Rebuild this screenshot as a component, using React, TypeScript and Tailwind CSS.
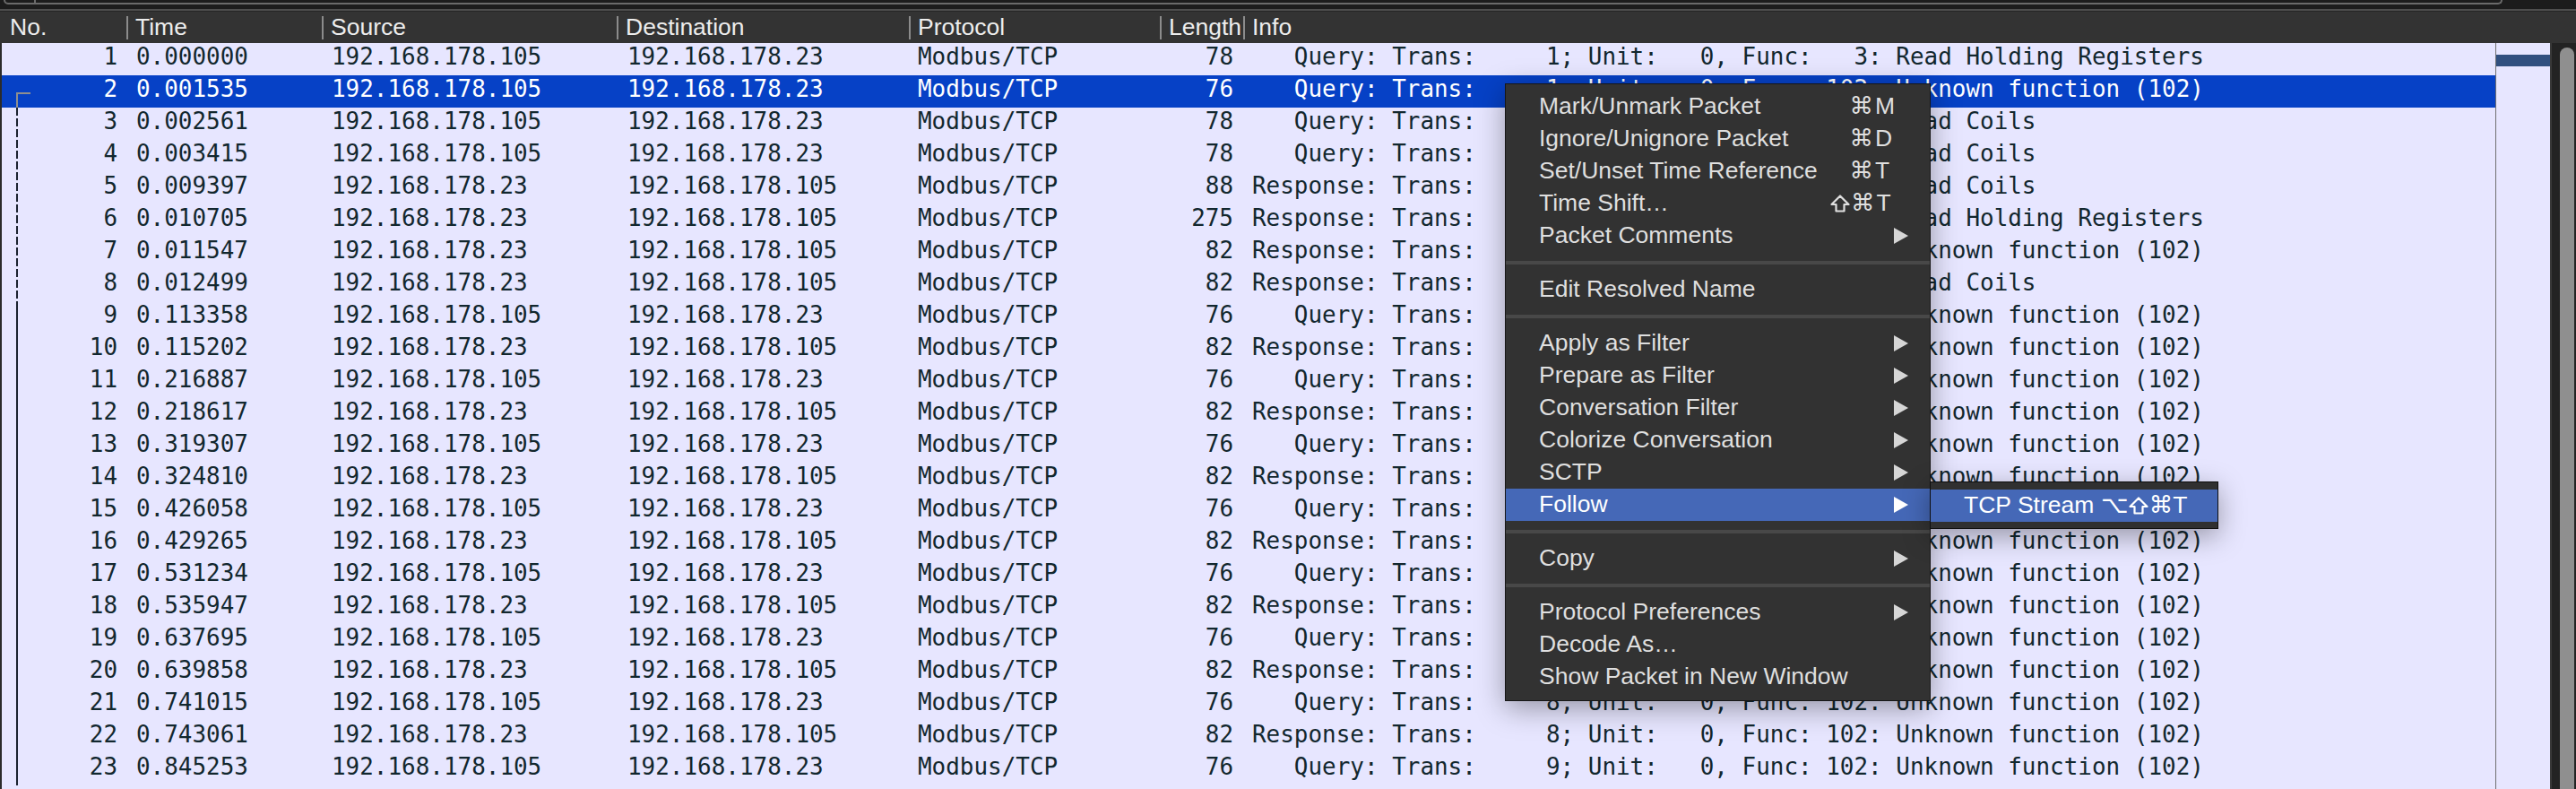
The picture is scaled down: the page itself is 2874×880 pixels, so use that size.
import React from 'react';

type Packet = {
  no: number;
  time: string;
  src: string;
  dst: string;
  len: number;
  kind: 'Query' | 'Response';
  trans: number;
  func: number;
};

type MenuItem = {
  label: string;
  mods?: string;
  shift?: boolean;
  keyChar?: string;
  arrow?: boolean;
  active?: boolean;
};

const HOST_A = '192.168.178.105';
const HOST_B = '192.168.178.23';

const packets: Packet[] = [
  { no: 1, time: '0.000000', src: HOST_A, dst: HOST_B, len: 78, kind: 'Query', trans: 1, func: 3 },
  { no: 2, time: '0.001535', src: HOST_A, dst: HOST_B, len: 76, kind: 'Query', trans: 1, func: 102 },
  { no: 3, time: '0.002561', src: HOST_A, dst: HOST_B, len: 78, kind: 'Query', trans: 1, func: 1 },
  { no: 4, time: '0.003415', src: HOST_A, dst: HOST_B, len: 78, kind: 'Query', trans: 1, func: 1 },
  { no: 5, time: '0.009397', src: HOST_B, dst: HOST_A, len: 88, kind: 'Response', trans: 1, func: 1 },
  { no: 6, time: '0.010705', src: HOST_B, dst: HOST_A, len: 275, kind: 'Response', trans: 1, func: 3 },
  { no: 7, time: '0.011547', src: HOST_B, dst: HOST_A, len: 82, kind: 'Response', trans: 1, func: 102 },
  { no: 8, time: '0.012499', src: HOST_B, dst: HOST_A, len: 82, kind: 'Response', trans: 1, func: 1 },
  { no: 9, time: '0.113358', src: HOST_A, dst: HOST_B, len: 76, kind: 'Query', trans: 2, func: 102 },
  { no: 10, time: '0.115202', src: HOST_B, dst: HOST_A, len: 82, kind: 'Response', trans: 2, func: 102 },
  { no: 11, time: '0.216887', src: HOST_A, dst: HOST_B, len: 76, kind: 'Query', trans: 3, func: 102 },
  { no: 12, time: '0.218617', src: HOST_B, dst: HOST_A, len: 82, kind: 'Response', trans: 3, func: 102 },
  { no: 13, time: '0.319307', src: HOST_A, dst: HOST_B, len: 76, kind: 'Query', trans: 4, func: 102 },
  { no: 14, time: '0.324810', src: HOST_B, dst: HOST_A, len: 82, kind: 'Response', trans: 4, func: 102 },
  { no: 15, time: '0.426058', src: HOST_A, dst: HOST_B, len: 76, kind: 'Query', trans: 5, func: 102 },
  { no: 16, time: '0.429265', src: HOST_B, dst: HOST_A, len: 82, kind: 'Response', trans: 5, func: 102 },
  { no: 17, time: '0.531234', src: HOST_A, dst: HOST_B, len: 76, kind: 'Query', trans: 6, func: 102 },
  { no: 18, time: '0.535947', src: HOST_B, dst: HOST_A, len: 82, kind: 'Response', trans: 6, func: 102 },
  { no: 19, time: '0.637695', src: HOST_A, dst: HOST_B, len: 76, kind: 'Query', trans: 7, func: 102 },
  { no: 20, time: '0.639858', src: HOST_B, dst: HOST_A, len: 82, kind: 'Response', trans: 7, func: 102 },
  { no: 21, time: '0.741015', src: HOST_A, dst: HOST_B, len: 76, kind: 'Query', trans: 8, func: 102 },
  { no: 22, time: '0.743061', src: HOST_B, dst: HOST_A, len: 82, kind: 'Response', trans: 8, func: 102 },
  { no: 23, time: '0.845253', src: HOST_A, dst: HOST_B, len: 76, kind: 'Query', trans: 9, func: 102 },
];

const funcNames: Record<number, string> = {
  1: 'Read Coils',
  3: 'Read Holding Registers',
  102: 'Unknown function (102)',
};

const SELECTED = 2;

const menuItems: (MenuItem | 'sep')[] = [
  { label: 'Mark/Unmark Packet', mods: '⌘', keyChar: 'M' },
  { label: 'Ignore/Unignore Packet', mods: '⌘', keyChar: 'D' },
  { label: 'Set/Unset Time Reference', mods: '⌘', keyChar: 'T' },
  { label: 'Time Shift…', mods: '⌘', shift: true, keyChar: 'T' },
  { label: 'Packet Comments', arrow: true },
  'sep',
  { label: 'Edit Resolved Name' },
  'sep',
  { label: 'Apply as Filter', arrow: true },
  { label: 'Prepare as Filter', arrow: true },
  { label: 'Conversation Filter', arrow: true },
  { label: 'Colorize Conversation', arrow: true },
  { label: 'SCTP', arrow: true },
  { label: 'Follow', arrow: true, active: true },
  'sep',
  { label: 'Copy', arrow: true },
  'sep',
  { label: 'Protocol Preferences', arrow: true },
  { label: 'Decode As…' },
  { label: 'Show Packet in New Window' },
];

function infoText(p: Packet) {
  return `${p.kind.padStart(8)}: Trans: ${String(p.trans).padStart(5)}; Unit:   0, Func: ${String(p.func).padStart(3)}: ${funcNames[p.func]}`;
}

function HeaderCell({ width, label }: { width: string; label: string }) {
  return (
    <div className={`${width} flex shrink-0 items-center overflow-hidden`}>
      <div className="h-[26px] w-[2px] shrink-0 bg-[#8c8c8c]" />
      <span className="whitespace-nowrap pl-[8px] leading-[29px]">{label}</span>
    </div>
  );
}

// conversation bracket drawn in the No. column
function Related({ no }: { no: number }) {
  if (no === SELECTED) {
    return (
      <div className="absolute left-[16px] top-[19px] h-[17px] w-[16px] border-l-2 border-t-2 border-[#8f8f8f]" />
    );
  }
  if (no > SELECTED && no <= 8) {
    return (
      <div className="absolute left-[16px] top-0 h-full w-[2px] bg-[repeating-linear-gradient(to_bottom,#1b2230_0px,#1b2230_9px,transparent_9px,transparent_12px)]" />
    );
  }
  if (no > 8) {
    return <div className="absolute left-[16px] top-0 h-full w-[2px] bg-[#1b2230]" />;
  }
  return null;
}

function PacketRow({ p }: { p: Packet }) {
  const selected = p.no === SELECTED;
  return (
    <div
      className={`flex h-[36px] shrink-0 whitespace-pre leading-[30px] ${
        selected ? 'bg-[#0641c6] text-white' : 'text-[#12272e]'
      }`}
    >
      <div className="relative w-[139px] shrink-0 pr-[10px] text-right">
        <Related no={p.no} />
        {p.no}
      </div>
      <div className="w-[218px] shrink-0 pl-[11px]">{p.time}</div>
      <div className="w-[329px] shrink-0 pl-[11px]">{p.src}</div>
      <div className="w-[326px] shrink-0 pl-[12px]">{p.dst}</div>
      <div className="w-[280px] shrink-0 pl-[10px]">Modbus/TCP</div>
      <div className="w-[93px] shrink-0 pr-[11px] text-right">{p.len}</div>
      <div className="w-[1397px] shrink-0 overflow-hidden pl-[10px]">{infoText(p)}</div>
    </div>
  );
}

function Arrow({ color }: { color: string }) {
  return (
    <svg width="16" height="18" viewBox="0 0 16 18">
      <polygon points="0,0 16,9 0,18" fill={color} />
    </svg>
  );
}

// outlined shift key glyph
function ShiftGlyph() {
  return (
    <svg width="22" height="20" viewBox="0 0 22 20" className="mr-[1px] inline-block align-[-2px]">
      <path
        d="M11 1.5 L20.5 11 H15.5 V18.5 H6.5 V11 H1.5 Z"
        fill="none"
        stroke="currentColor"
        strokeWidth="2.2"
        strokeLinejoin="round"
      />
    </svg>
  );
}

function MenuRow({ item }: { item: MenuItem }) {
  return (
    <div
      className={`flex h-[36px] items-center pl-[37px] pr-[24px] ${
        item.active ? 'bg-[#4568b7] text-white' : 'text-[#dfdfdf]'
      }`}
    >
      <span className="flex-1 whitespace-nowrap">{item.label}</span>
      <div className="flex w-[87px] items-center justify-end">
        {item.keyChar && (
          <>
            <span className="flex flex-1 items-center justify-end">
              {item.shift && <ShiftGlyph />}
              {item.mods}
            </span>
            <span className="w-[39px] pl-[2px]">{item.keyChar}</span>
          </>
        )}
        {item.arrow && <Arrow color={item.active ? '#ffffff' : '#d6d6d6'} />}
      </div>
    </div>
  );
}

function ContextMenu() {
  return (
    <>
      <div className="absolute left-[1679px] top-[93px] z-10 w-[475px] border border-[#161616] bg-[#323232] pb-[8px] pt-[7px] shadow-[0_8px_30px_rgba(0,0,0,0.35)]">
        {menuItems.map((item, i) =>
          item === 'sep' ? (
            <div key={i} className="flex h-[24px] items-center">
              <div className="h-[4px] w-full bg-[#484848]" />
            </div>
          ) : (
            <MenuRow key={i} item={item} />
          ),
        )}
      </div>

      {/* Follow submenu */}
      <div className="absolute left-[2153px] top-[537px] z-20 w-[322px] border border-[#0e0e0e] bg-[#303030] pb-[7px] pt-[8px] shadow-[0_8px_30px_rgba(0,0,0,0.35)]">
        <div className="flex h-[36px] items-center bg-[#4568b7] pl-[37px] text-white">
          <span className="whitespace-nowrap">TCP Stream</span>
          <span className="ml-[8px] flex items-center whitespace-nowrap">
            ⌥
            <ShiftGlyph />
            ⌘T
          </span>
        </div>
      </div>
    </>
  );
}

export default function App() {
  return (
    <div className="relative h-[880px] w-[2874px] overflow-hidden bg-[#1c1c1c] font-['Liberation_Sans','DejaVu_Sans',sans-serif] text-[26.5px]">
      {/* display filter box (bottom edge only) */}
      <div className="h-[10px] bg-[#1c1c1c]">
        <div className="ml-[4px] flex h-[5px] w-[2788px] rounded-b-[7px] border-x-2 border-b-2 border-[#6a6a6a]">
          <div className="w-[34px] border-r-2 border-[#6a6a6a]" />
        </div>
      </div>
      <div className="h-[2px] bg-[#4e4e4e]" />
      <div className="h-[1px] bg-[#262626]" />

      {/* column header */}
      <div className="flex h-[35px] bg-[#333333] text-[#ededed]">
        <div className="flex w-[141px] shrink-0 items-center pl-[11px]">
          <span className="leading-[29px]">No.</span>
        </div>
        <HeaderCell width="w-[218px]" label="Time" />
        <HeaderCell width="w-[329px]" label="Source" />
        <HeaderCell width="w-[326px]" label="Destination" />
        <HeaderCell width="w-[280px]" label="Protocol" />
        <HeaderCell width="w-[93px]" label="Length" />
        <HeaderCell width="w-[1397px]" label="Info" />
      </div>

      <div className="flex h-[832px]">
        {/* packet list */}
        <div className="flex w-[2784px] shrink-0 flex-col overflow-hidden border-l-2 border-[#2b2b2b] bg-[#e7e6ff] font-['DejaVu_Sans_Mono',monospace] text-[25.95px]">
          {packets.map((p) => (
            <PacketRow key={p.no} p={p} />
          ))}
        </div>
        <div className="w-[1px] shrink-0 bg-[#707070]" />

        {/* overview minimap */}
        <div className="w-[60px] shrink-0 bg-[#e7e6ff] pt-[13px]">
          <div className="h-[13px] bg-[#31507f]" />
        </div>

        {/* scrollbar */}
        <div className="flex w-[29px] shrink-0 border-l-2 border-[#383838] bg-[#232323] pl-[9px] pt-[5px]">
          <div className="h-full w-[16px] rounded-t-full bg-[#8f8f8f]" />
        </div>
      </div>

      <ContextMenu />
    </div>
  );
}
